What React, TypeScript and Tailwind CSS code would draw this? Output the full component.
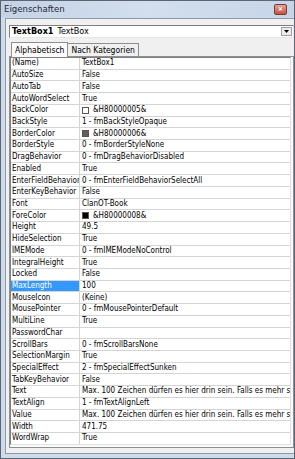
import React from "react";

type Row = { name: string; value: string; swatch?: string };

const rows: Row[] = [
  { name: "(Name)", value: "TextBox1" },
  { name: "AutoSize", value: "False" },
  { name: "AutoTab", value: "False" },
  { name: "AutoWordSelect", value: "True" },
  { name: "BackColor", value: "&H80000005&", swatch: "#ffffff" },
  { name: "BackStyle", value: "1 - fmBackStyleOpaque" },
  { name: "BorderColor", value: "&H80000006&", swatch: "#5f5f5f" },
  { name: "BorderStyle", value: "0 - fmBorderStyleNone" },
  { name: "DragBehavior", value: "0 - fmDragBehaviorDisabled" },
  { name: "Enabled", value: "True" },
  { name: "EnterFieldBehavior", value: "0 - fmEnterFieldBehaviorSelectAll" },
  { name: "EnterKeyBehavior", value: "False" },
  { name: "Font", value: "ClanOT-Book" },
  { name: "ForeColor", value: "&H80000008&", swatch: "#000000" },
  { name: "Height", value: "49.5" },
  { name: "HideSelection", value: "True" },
  { name: "IMEMode", value: "0 - fmIMEModeNoControl" },
  { name: "IntegralHeight", value: "True" },
  { name: "Locked", value: "False" },
  { name: "MaxLength", value: "100" },
  { name: "MouseIcon", value: "(Keine)" },
  { name: "MousePointer", value: "0 - fmMousePointerDefault" },
  { name: "MultiLine", value: "True" },
  { name: "PasswordChar", value: "" },
  { name: "ScrollBars", value: "0 - fmScrollBarsNone" },
  { name: "SelectionMargin", value: "True" },
  { name: "SpecialEffect", value: "2 - fmSpecialEffectSunken" },
  { name: "TabKeyBehavior", value: "False" },
  { name: "Text", value: "Max. 100 Zeichen dürfen es hier drin sein. Falls es mehr s" },
  { name: "TextAlign", value: "1 - fmTextAlignLeft" },
  { name: "Value", value: "Max. 100 Zeichen dürfen es hier drin sein. Falls es mehr s" },
  { name: "Width", value: "471.75" },
  { name: "WordWrap", value: "True" },
];

export default function App() {
  return (
    <div
      className="w-[295px] h-[459px] flex flex-col border border-[#5b6675] bg-[#cfdbea] overflow-hidden text-black"
      style={{ fontFamily: "'DejaVu Sans Condensed', 'Liberation Sans', sans-serif" }}
    >
      {/* Titelleiste */}
      <div className="h-[16px] shrink-0 flex items-center justify-between pl-[3px] pr-[7px] bg-gradient-to-r from-[#c3d2e5] via-[#d3dfee] to-[#c6d5e8]">
        <span className="text-[9.5px] text-[#1e2a3a]">Eigenschaften</span>
        <div className="w-[13px] h-[11px] rounded-[2px] border border-[#7d3a30] bg-gradient-to-b from-[#e3a49a] to-[#c4513f] flex items-center justify-center text-[7px] font-bold text-white leading-none">
          ×
        </div>
      </div>

      {/* Rahmen */}
      <div className="flex-1 min-h-0 px-[4px] pb-[4px] pt-[1px] flex">
        <div className="flex-1 min-h-0 border border-[#8d99a8] bg-[#f0f0f0] flex flex-col pl-[3px] pr-[4px] pt-[6px] pb-[5px]">
          {/* Objektauswahl */}
          <div className="h-[13px] shrink-0 border border-t-[#7f7f7f] border-l-[#7f7f7f] border-b-[#e6e6e6] border-r-[#e6e6e6] bg-white flex items-center">
            <span className="pl-[2px] text-[9px] font-bold leading-none">TextBox1</span>
            <span className="pl-[4px] text-[9px] leading-none flex-1">TextBox</span>
            <div className="w-[11px] h-[9px] mr-[1px] bg-[#ececec] border border-[#a0a0a0] flex items-center justify-center">
              <svg width="5" height="3" viewBox="0 0 5 3">
                <path d="M0 0h5L2.5 3z" fill="#000" />
              </svg>
            </div>
          </div>

          {/* Registerkarten */}
          <div className="h-[15px] shrink-0 mt-[3px] flex items-end pl-[2px]">
            <div className="h-[15px] px-[3px] border border-b-0 border-[#8e8f8f] bg-[#fbfbfb] flex items-center text-[8.5px] relative z-10 -mb-px">
              Alphabetisch
            </div>
            <div className="h-[13px] px-[3px] border border-b-0 border-l-0 border-[#8e8f8f] bg-[#f0f0f0] flex items-center text-[8.5px]">
              Nach Kategorien
            </div>
          </div>

          {/* Eigenschaftsliste */}
          <div className="flex-1 min-h-0 border border-[#8e8f8f] bg-[#fbfbfb] pl-0 pr-[2px] pt-0 pb-[2px] flex">
            <div className="flex-1 min-w-0 border border-t-[#808080] border-l-[#808080] border-b-[#e0e0e0] border-r-[#e0e0e0] bg-white overflow-hidden">
              {rows.map((r) => (
                <div
                  key={r.name}
                  className="h-[11.72px] flex border-b border-[#d4d4d4] text-[8px] leading-none"
                >
                  <div
                    className={
                      r.name === "MaxLength"
                        ? "w-[69px] shrink-0 pl-[1px] flex items-center bg-[#3399ff] text-white border-r border-[#d4d4d4] whitespace-nowrap overflow-hidden"
                        : "w-[69px] shrink-0 pl-[1px] flex items-center border-r border-[#d4d4d4] whitespace-nowrap overflow-hidden"
                    }
                  >
                    {r.name}
                  </div>
                  <div className="flex-1 min-w-0 pl-[2px] flex items-center whitespace-nowrap overflow-hidden">
                    {r.swatch && (
                      <span
                        className="inline-block w-[7px] h-[7px] mr-[4px] border border-[#555] shrink-0"
                        style={{ backgroundColor: r.swatch }}
                      />
                    )}
                    {r.value}
                  </div>
                </div>
              ))}
            </div>
          </div>
        </div>
      </div>
    </div>
  );
}
